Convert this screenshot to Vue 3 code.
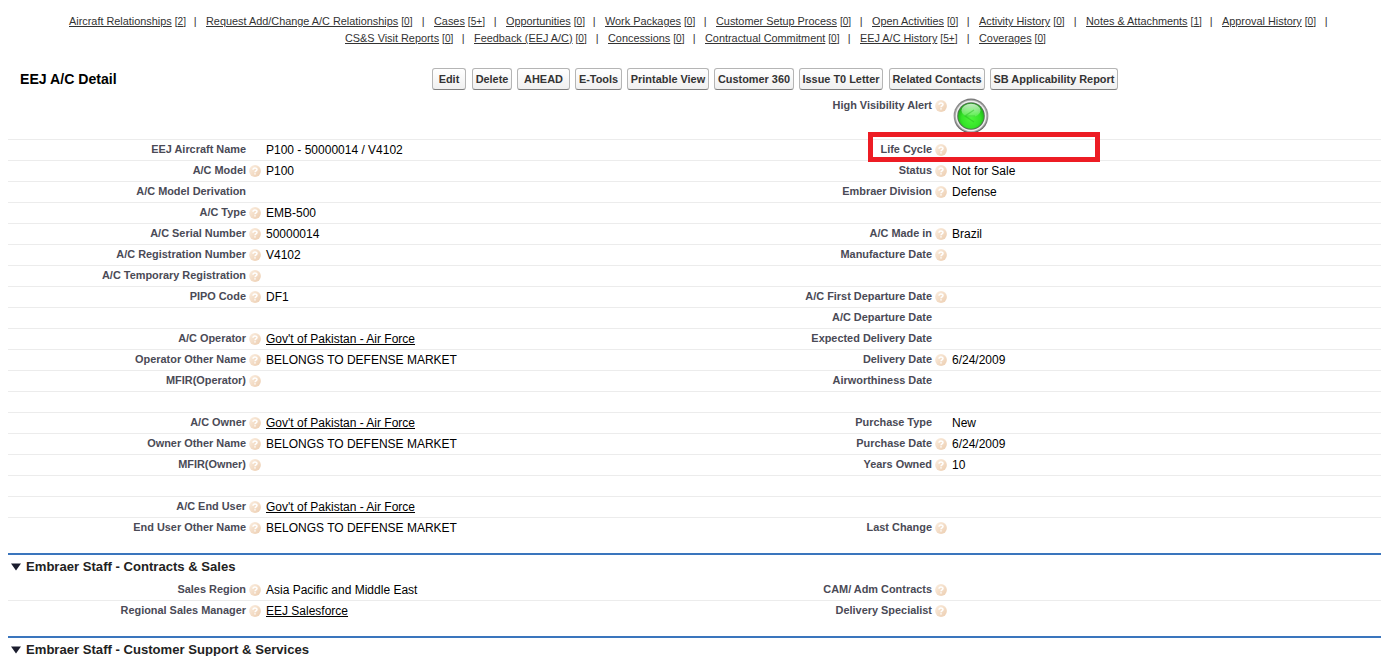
<script setup>
const navLines = [
  {
    start: 69,
    items: [
      ['Aircraft Relationships', '2', 206 - 69],
      ['Request Add/Change A/C Relationships', '0', 434 - 206],
      ['Cases', '5+', 506 - 434],
      ['Opportunities', '0', 605 - 506],
      ['Work Packages', '0', 716 - 605],
      ['Customer Setup Process', '0', 872 - 716],
      ['Open Activities', '0', 979 - 872],
      ['Activity History', '0', 1086 - 979],
      ['Notes & Attachments', '1', 1222 - 1086],
      ['Approval History', '0', 115],
    ],
  },
  {
    start: 345,
    items: [
      ['CS&S Visit Reports', '0', 474 - 345],
      ['Feedback (EEJ A/C)', '0', 608 - 474],
      ['Concessions', '0', 705 - 608],
      ['Contractual Commitment', '0', 860 - 705],
      ['EEJ A/C History', '5+', 979 - 860],
      ['Coverages', '0', 80],
    ],
  },
]

const buttons = [
  ['Edit', 34, 6], ['Delete', 40, 5], ['AHEAD', 53, 5], ['E-Tools', 47, 5],
  ['Printable View', 82, 5], ['Customer 360', 80, 5], ['Issue T0 Letter', 84, 6],
  ['Related Contacts', 96, 5], ['SB Applicability Report', 128, 0],
]

const f = (label, value = '', help = true, link = false) => ({ label, value, help, link })
const none = f('', '', false)

const detail = [
  [f('EEJ Aircraft Name', 'P100 - 50000014 / V4102', false), f('Life Cycle')],
  [f('A/C Model', 'P100'), f('Status', 'Not for Sale')],
  [f('A/C Model Derivation', '', false), f('Embraer Division', 'Defense')],
  [f('A/C Type', 'EMB-500'), none],
  [f('A/C Serial Number', '50000014'), f('A/C Made in', 'Brazil')],
  [f('A/C Registration Number', 'V4102'), f('Manufacture Date')],
  [f('A/C Temporary Registration'), none],
  [f('PIPO Code', 'DF1'), f('A/C First Departure Date')],
  [none, f('A/C Departure Date', '', false)],
  [f('A/C Operator', "Gov't of Pakistan - Air Force", true, true), f('Expected Delivery Date', '', false)],
  [f('Operator Other Name', 'BELONGS TO DEFENSE MARKET'), f('Delivery Date', '6/24/2009')],
  [f('MFIR(Operator)'), f('Airworthiness Date', '', false)],
  [none, none],
  [f('A/C Owner', "Gov't of Pakistan - Air Force", true, true), f('Purchase Type', 'New', false)],
  [f('Owner Other Name', 'BELONGS TO DEFENSE MARKET'), f('Purchase Date', '6/24/2009')],
  [f('MFIR(Owner)'), f('Years Owned', '10')],
  [none, none],
  [f('A/C End User', "Gov't of Pakistan - Air Force", true, true), none],
  [f('End User Other Name', 'BELONGS TO DEFENSE MARKET'), f('Last Change')],
]

const staff = [
  [f('Sales Region', 'Asia Pacific and Middle East'), f('CAM/ Adm Contracts')],
  [f('Regional Sales Manager', 'EEJ Salesforce', true, true), f('Delivery Specialist')],
]

const blocks = [
  { title: '', rows: detail },
  { title: 'Embraer Staff - Contracts & Sales', rows: staff },
  { title: 'Embraer Staff - Customer Support & Services', rows: [] },
]
</script>

<template>
  <main class="page">
    <svg class="defs" width="0" height="0">
      <defs>
        <linearGradient id="helpFill" x1="0" y1="0" x2="1" y2="1">
          <stop offset="0" stop-color="#fbeee0" />
          <stop offset="1" stop-color="#eccdb0" />
        </linearGradient>
        <linearGradient id="rim" x1="0" y1="0" x2="0" y2="1">
          <stop offset="0" stop-color="#777" />
          <stop offset=".5" stop-color="#999" />
          <stop offset="1" stop-color="#555" />
        </linearGradient>
        <radialGradient id="lamp" cx=".5" cy=".6" r=".6">
          <stop offset="0" stop-color="#4df53a" />
          <stop offset=".6" stop-color="#35e428" />
          <stop offset="1" stop-color="#18a812" />
        </radialGradient>
        <linearGradient id="gloss" x1="0" y1="0" x2="0" y2="1">
          <stop offset="0" stop-color="#fff" stop-opacity=".75" />
          <stop offset="1" stop-color="#fff" stop-opacity=".1" />
        </linearGradient>
      </defs>
    </svg>

    <nav class="related">
      <div v-for="line in navLines" :key="line.start" class="nav-line" :style="{ paddingLeft: line.start + 'px' }">
        <span v-for="[name, count, w] in line.items" :key="name" class="nav-item" :style="{ width: w + 'px' }">
          <a class="nav-link"><u>{{ name }}</u><span class="count">[<u>{{ count }}</u>]</span></a>
          <span v-if="name !== 'Coverages'" class="sep">|</span>
        </span>
      </div>
    </nav>

    <header class="bar">
      <h2>EEJ A/C Detail</h2>
      <div class="buttons">
        <button v-for="[name, w, gap] in buttons" :key="name" :style="{ width: w + 'px', marginRight: gap + 'px' }">{{ name }}</button>
      </div>
    </header>

    <div class="row alert">
      <span></span><span></span><span></span>
      <span class="label">High Visibility Alert</span>
      <span class="help">
        <svg width="12" height="12" viewBox="0 0 12 12"><circle cx="6" cy="6" r="5.9" fill="url(#helpFill)" /><path d="M4 4.7C4 2.4 8 2.4 8 4.6C8 6 6 5.8 6 7.3M6 8.3V9.6" fill="none" stroke="#fff" stroke-width="1.5" /></svg>
      </span>
      <span class="lamp">
        <svg width="36" height="36" viewBox="0 0 36 36">
          <circle cx="18" cy="18" r="17.4" fill="url(#rim)" />
          <circle cx="18" cy="18" r="16.2" fill="#aaa" />
          <circle cx="18" cy="18" r="15.2" fill="#f0f0f0" />
          <circle cx="18" cy="18" r="13.8" fill="#557055" />
          <circle cx="18" cy="18" r="12.8" fill="url(#lamp)" />
          <ellipse cx="18" cy="12.5" rx="9.5" ry="6.8" fill="url(#gloss)" />
          <path d="M21 12L12 18L21 24M12 18H22" fill="none" stroke="#20b51a" stroke-width="1.2" opacity=".45" />
        </svg>
      </span>
    </div>

    <section v-for="(block, b) in blocks" :key="b" class="block">
      <h3 v-if="block.title">
        <svg width="10" height="8" viewBox="0 0 10 8"><path d="M0 0.5H10L5 7.5Z" fill="#1b1d2e" /></svg>
        {{ block.title }}
      </h3>
      <div v-for="(row, r) in block.rows" :key="r" class="row">
        <template v-for="(cell, c) in row" :key="c">
          <span class="label">{{ cell.label }}</span>
          <span class="help">
            <svg v-if="cell.help" width="12" height="12" viewBox="0 0 12 12"><circle cx="6" cy="6" r="5.9" fill="url(#helpFill)" /><path d="M4 4.7C4 2.4 8 2.4 8 4.6C8 6 6 5.8 6 7.3M6 8.3V9.6" fill="none" stroke="#fff" stroke-width="1.5" /></svg>
          </span>
          <span class="value"><a v-if="cell.link" class="value-link">{{ cell.value }}</a><template v-else>{{ cell.value }}</template></span>
        </template>
      </div>
    </section>
    <div class="marker"></div>
  </main>
</template>

<style>
html, body { background: #fff; overflow: hidden; }
</style>

<style scoped>
.page {
  position: relative;
  box-sizing: border-box;
  width: 1389px;
  height: 656px;
  overflow: hidden;
  font-family: Arial, "Liberation Sans", sans-serif;
  color: #000;
}
.defs { position: absolute; }
.related { padding-top: 13px; height: 47px; box-sizing: content-box; font-size: 10.88px; color: #333; }
.nav-line { display: flex; height: 17px; line-height: 17px; }
.nav-item { flex: none; display: flex; justify-content: space-between; white-space: nowrap; }
.nav-link u { text-decoration: underline; text-decoration-thickness: 1px; text-underline-offset: 1px; }
.count { margin-left: 3px; font-size: 10.1px; }
.sep { margin-right: 9.5px; }
.bar { display: flex; height: 36px; padding: 8px 0 0 20px; box-sizing: border-box; }
h2 { width: 412px; margin: 0; font-size: 14.1px; line-height: 22px; }
.buttons { display: flex; }
button {
  box-sizing: border-box;
  height: 22px;
  padding: 0;
  border: 1px solid #b5b5b5;
  border-bottom-color: #7f7f7f;
  border-radius: 3px;
  background: linear-gradient(#fff, #f0f0f0);
  color: #333;
  font: bold 10.92px/19px Arial, "Liberation Sans", sans-serif;
  white-space: nowrap;
}
.row {
  display: grid;
  grid-template-columns: 238px 20px 448px 218px 20px 1fr;
  box-sizing: border-box;
  width: 1373px;
  height: 21px;
  margin-left: 8px;
  border-bottom: 1px solid #ececec;
  white-space: nowrap;
}
.row:last-child { border-bottom-color: transparent; }
.row.alert { height: 44px; border-bottom-color: #ececec; }
.label { text-align: right; font-size: 10.92px; font-weight: bold; line-height: 19px; color: #4a4a56; }
.help { padding: 4px 0 0 3px; line-height: 0; }
.value { font-size: 12px; line-height: 20px; }
.value-link { text-decoration: underline; text-decoration-thickness: 1px; text-underline-offset: 1px; text-decoration-skip-ink: none; }
.lamp { padding: 2px 0 0 1px; line-height: 0; }
h3 {
  display: flex;
  align-items: center;
  gap: 5px;
  box-sizing: border-box;
  width: 1373px;
  height: 27px;
  margin: 14px 0 0 8px;
  padding: 0 0 2px 3px;
  border-top: 2px solid #3a75bd;
  font-size: 13.1px;
  color: #222;
}
.marker {
  position: absolute;
  left: 868px;
  top: 132px;
  box-sizing: border-box;
  width: 232px;
  height: 30px;
  border: 5px solid #ed1c24;
}
</style>
